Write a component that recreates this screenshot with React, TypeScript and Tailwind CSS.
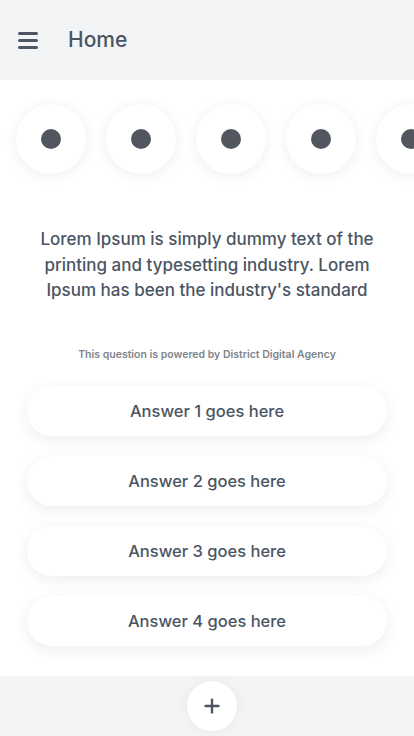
import { Plus } from "lucide-react";

const answers = [
  "Answer 1 goes here",
  "Answer 2 goes here",
  "Answer 3 goes here",
  "Answer 4 goes here",
];

export default function App() {
  return (
    <div
      className="w-[414px] h-[736px] flex flex-col bg-white text-[#4b5563] overflow-hidden"
      style={{ fontFamily: "Inter, 'Noto Sans', sans-serif" }}
    >
      <header className="h-[80px] shrink-0 bg-[#f3f4f6] flex items-center px-[18px]">
        <div className="flex flex-col gap-[4px] w-[20px]">
          <span className="h-[3px] bg-[#4b5563] rounded-sm" />
          <span className="h-[3px] bg-[#4b5563] rounded-sm" />
          <span className="h-[3px] bg-[#4b5563] rounded-sm" />
        </div>
        <h1 className="ml-[30px] text-[21px] font-medium">Home</h1>
      </header>

      <main className="flex-1 flex flex-col">
        <div className="flex gap-[20px] pl-[16px] pt-[24px] pb-[20px] overflow-hidden">
          {[0, 1, 2, 3, 4].map((i) => (
            <div
              key={i}
              className="w-[70px] h-[70px] shrink-0 rounded-full bg-white shadow-[0_2px_14px_rgba(0,0,0,0.07)] flex items-center justify-center"
            >
              <span className="w-[20px] h-[20px] rounded-full bg-[#52565f]" />
            </div>
          ))}
        </div>

        <p className="mt-[33px] px-[24px] text-center text-[17px] leading-[25.5px] font-medium">
          Lorem Ipsum is simply dummy text of the printing and typesetting industry. Lorem Ipsum has been the industry's standard
        </p>

        <p className="mt-[43px] text-center text-[10.5px] font-semibold text-[#80848a]">
          This question is powered by District Digital Agency
        </p>

        <div className="mt-[24px] flex flex-col gap-[20px] px-[27px]">
          {answers.map((a) => (
            <button
              key={a}
              className="h-[50px] w-[360px] rounded-full bg-white shadow-[0_4px_16px_rgba(0,0,0,0.07)] text-[16.5px] font-medium"
            >
              {a}
            </button>
          ))}
        </div>
      </main>

      <footer className="h-[60px] shrink-0 bg-[#f3f4f6] flex items-center justify-center pl-[10px]">
        <button className="w-[50px] h-[50px] rounded-full bg-white shadow-[0_0_14px_rgba(0,0,0,0.05)] flex items-center justify-center">
          <Plus size={22} strokeWidth={2.6} />
        </button>
      </footer>
    </div>
  );
}
